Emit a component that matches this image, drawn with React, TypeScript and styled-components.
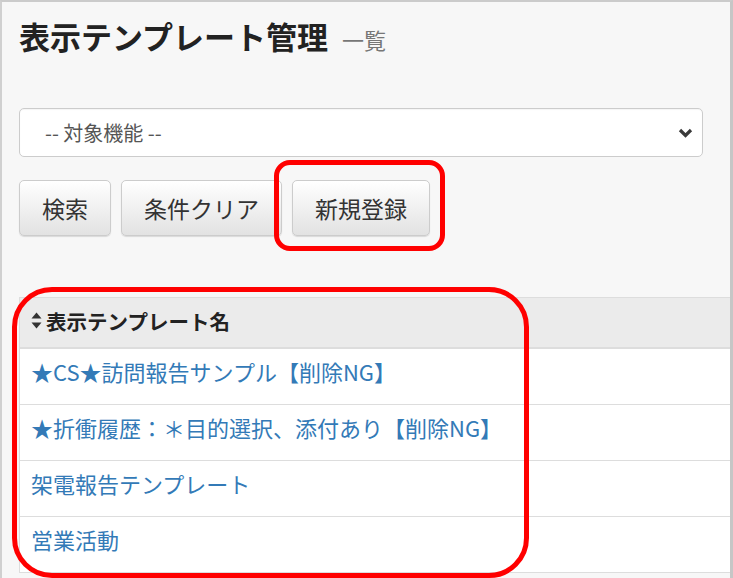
import React from 'react';
import styled, { createGlobalStyle } from 'styled-components';

const GlobalStyle = createGlobalStyle`
  html, body {
    margin: 0;
    padding: 0;
    background: #f7f7f7;
  }
  body {
    font-family: "Noto Sans CJK JP", "Noto Sans", "Liberation Sans", sans-serif;
    color: #333;
  }
`;

const Page = styled.div`
  position: relative;
  width: 733px;
  height: 578px;
  overflow: hidden;
`;

const Panel = styled.div`
  box-sizing: border-box;
  width: 733px;
  height: 578px;
  background: #f7f7f7;
  border-top: 2px solid #cbcbcb;
  border-left: 2px solid #d0d0d0;
  border-right: 3px solid #c6c6c6;
  padding: 15px 0 0 17px;
  display: flex;
  flex-direction: column;
`;

const Title = styled.h1`
  margin: 0;
  font-size: 31px;
  line-height: 38px;
  font-weight: 700;
  color: #222;
  display: flex;
  align-items: baseline;
  gap: 14px;
`;

const SubTitle = styled.small`
  font-size: 22px;
  font-weight: 400;
  color: #777;
`;

const SelectBox = styled.div`
  box-sizing: border-box;
  margin-top: 50px;
  width: 684px;
  height: 49px;
  background: #fff;
  border: 1px solid #ccc;
  border-radius: 5px;
  display: flex;
  align-items: center;
  justify-content: space-between;
  padding: 0 9px 0 25px;
  font-size: 20px;
  color: #555;
  box-shadow: inset 0 1px 1px rgba(0, 0, 0, 0.04);
`;

const ButtonRow = styled.div`
  display: flex;
  gap: 10px;
  margin-top: 23px;
`;

const Button = styled.button`
  box-sizing: border-box;
  height: 56px;
  padding: 0 22px;
  font-family: inherit;
  font-size: 23px;
  color: #333;
  background: linear-gradient(to bottom, #ffffff 0%, #e2e2e2 100%);
  border: 1px solid #ccc;
  border-radius: 5px;
  box-shadow: 0 1px 1px rgba(0, 0, 0, 0.12);
`;

const Table = styled.table`
  margin-top: 61px;
  width: 711px;
  border-collapse: collapse;
  background: #fff;
  border-left: 1px solid #ddd;
`;

const HeadCell = styled.th`
  box-sizing: border-box;
  height: 50px;
  padding: 0 11px 4px;
  text-align: left;
  font-size: 20.5px;
  font-weight: 700;
  color: #222;
  background: #ebebeb;
  border-top: 1px solid #ddd;
  border-bottom: 2px solid #ddd;
`;

const HeadLabel = styled.span`
  display: inline-flex;
  align-items: center;
  gap: 4px;
`;

const Cell = styled.td`
  padding: 5px 11px 16px;
  line-height: 34px;
  font-size: 22px;
  border-top: 1px solid #ddd;
  border-bottom: 1px solid #ddd;
`;

const Link = styled.a`
  color: #337ab7;
  text-decoration: none;
`;

// 赤枠の注記
const Mark = styled.div<{ $r: number }>`
  position: absolute;
  box-sizing: border-box;
  border: 5px solid #ff0000;
  border-radius: ${(p) => p.$r}px;
  pointer-events: none;
`;

const SortIcon = () => (
  <svg width="11" height="17" viewBox="0 0 11 17">
    <path d="M5.5 0.5 L10.5 6.5 H0.5 Z" fill="#333" />
    <path d="M5.5 16.5 L10.5 10.5 H0.5 Z" fill="#333" />
  </svg>
);

const Chevron = () => (
  <svg width="15" height="10" viewBox="0 0 15 10">
    <polyline points="2,2 7.5,7.5 13,2" fill="none" stroke="#3a3a3a" strokeWidth="3.2" />
  </svg>
);

const templates = [
  '★CS★訪問報告サンプル【削除NG】',
  '★折衝履歴：＊目的選択、添付あり【削除NG】',
  '架電報告テンプレート',
  '営業活動',
];

export default function App() {
  return (
    <Page>
      <GlobalStyle />
      <Panel>
        <Title>
          表示テンプレート管理<SubTitle>一覧</SubTitle>
        </Title>
        <SelectBox>
          <span>-- 対象機能 --</span>
          <Chevron />
        </SelectBox>
        <ButtonRow>
          <Button>検索</Button>
          <Button>条件クリア</Button>
          <Button>新規登録</Button>
        </ButtonRow>
        <Table>
          <thead>
            <tr>
              <HeadCell>
                <HeadLabel>
                  <SortIcon />
                  表示テンプレート名
                </HeadLabel>
              </HeadCell>
            </tr>
          </thead>
          <tbody>
            {templates.map((name) => (
              <tr key={name}>
                <Cell>
                  <Link href="#">{name}</Link>
                </Cell>
              </tr>
            ))}
          </tbody>
        </Table>
      </Panel>
      <Mark $r={16} style={{ left: 274, top: 160, width: 171, height: 91 }} />
      <Mark $r={40} style={{ left: 12, top: 287, width: 517, height: 291 }} />
    </Page>
  );
}
